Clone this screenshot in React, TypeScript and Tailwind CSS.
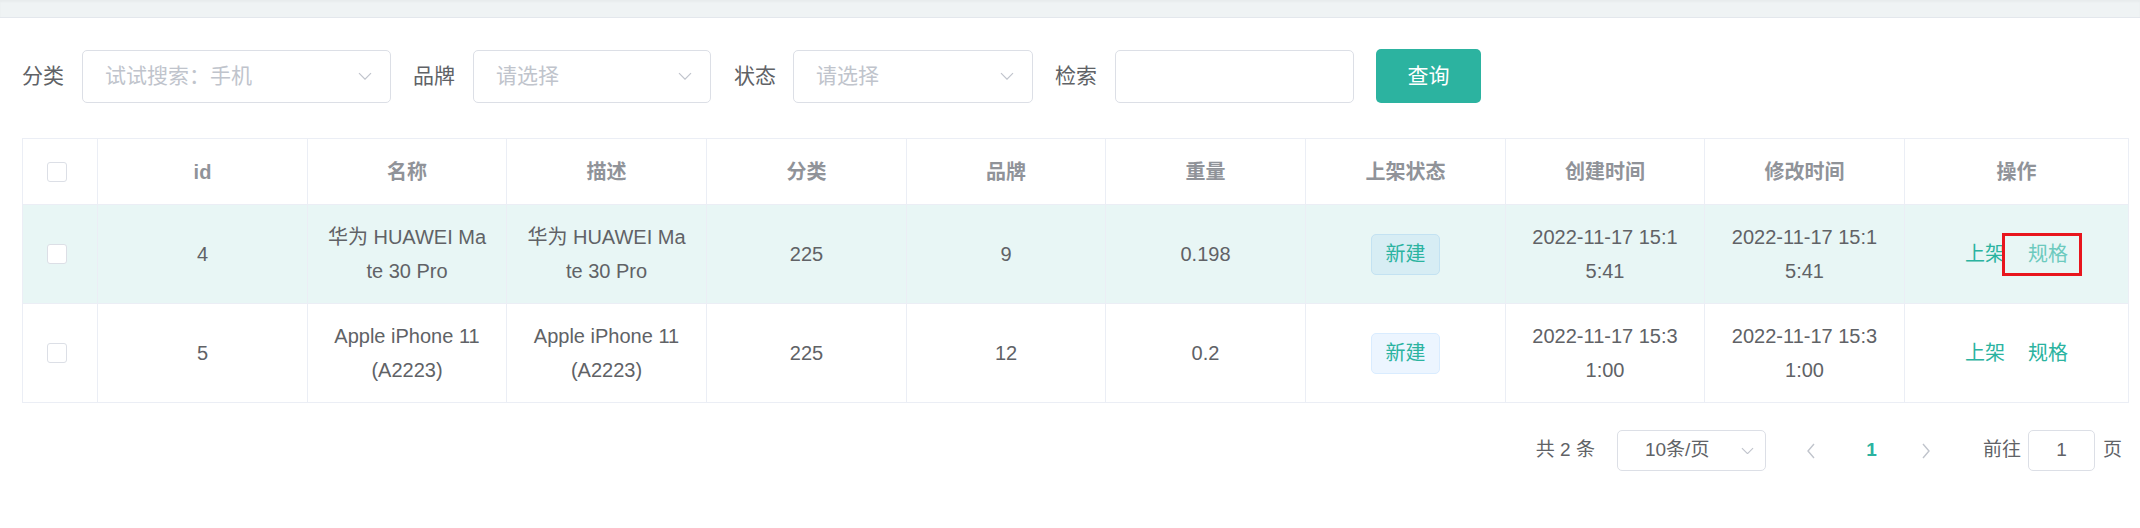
import React from 'react';

const font = 'font-["Liberation_Sans","Noto_Sans_CJK_SC",sans-serif]';

function Chevron({ size = 14 }: { size?: number }) {
  return (
    <svg width={size} height={size * 0.6} viewBox="0 0 14 8" fill="none">
      <polyline points="1,1 7,7 13,1" stroke="#c0c4cc" strokeWidth="1.2" />
    </svg>
  );
}

function Select({ placeholder, width }: { placeholder: string; width: string }) {
  return (
    <div className={`${width} h-[53px] border border-[#dcdfe6] rounded-[5px] bg-white flex items-center justify-between pl-[22px] pr-[18px]`}>
      <span className="text-[21px] text-[#c0c4cc]">{placeholder}</span>
      <Chevron />
    </div>
  );
}

function Checkbox() {
  return <div className="w-[20px] h-[20px] rounded-[3px] border border-[#dcdfe6] bg-white" />;
}

const headers = ['id', '名称', '描述', '分类', '品牌', '重量', '上架状态', '创建时间', '修改时间', '操作'];
const widths = [75, 210, 199, 200, 200, 199, 200, 200, 199, 200, 224];

const rows = [
  {
    id: '4',
    name: ['华为 HUAWEI Ma', 'te 30 Pro'],
    category: '225',
    brand: '9',
    weight: '0.198',
    created: ['2022-11-17 15:1', '5:41'],
    active: true,
  },
  {
    id: '5',
    name: ['Apple iPhone 11', '(A2223)'],
    category: '225',
    brand: '12',
    weight: '0.2',
    created: ['2022-11-17 15:3', '1:00'],
    active: false,
  },
];

function Lines({ lines }: { lines: string[] }) {
  return (
    <div className="flex flex-col items-center leading-[34px]">
      {lines.map((l) => (
        <span key={l} className="whitespace-nowrap">{l}</span>
      ))}
    </div>
  );
}

export default function App() {
  return (
    <div className={`min-h-screen bg-white ${font} text-[#606266]`}>
      <div className="h-[18px] bg-[#eff3f4] border-b border-[#e3e7ec] shadow-[inset_0_2px_2px_rgba(0,0,0,0.03)]" />
      <div className="pl-[22px] pr-[11px]">
        {/* filters */}
        <div className="flex items-center pt-[31px] text-[21px]">
          <span className="mr-[18px]">分类</span>
          <Select placeholder="试试搜索：手机" width="w-[309px]" />
          <span className="ml-[22px] mr-[18px]">品牌</span>
          <Select placeholder="请选择" width="w-[238px]" />
          <span className="ml-[23px] mr-[17px]">状态</span>
          <Select placeholder="请选择" width="w-[240px]" />
          <span className="ml-[22px] mr-[18px]">检索</span>
          <div className="w-[239px] h-[53px] border border-[#dcdfe6] rounded-[5px] bg-white" />
          <button className="ml-[22px] w-[105px] h-[54px] rounded-[5px] bg-[#2cb3a0] text-white text-[21px]">查询</button>
        </div>

        {/* table */}
        <table className="mt-[35px] w-[2107px] table-fixed border-collapse border border-[#ebeef5] text-[20px]">
          <colgroup>
            {widths.map((w, i) => (
              <col key={i} style={{ width: w }} />
            ))}
          </colgroup>
          <thead>
            <tr className="h-[66px]">
              <th className="border border-[#ebeef5] pl-[24px]">
                <Checkbox />
              </th>
              {headers.map((h) => (
                <th key={h} className="border border-[#ebeef5] font-bold text-[#909399] text-center">
                  {h}
                </th>
              ))}
            </tr>
          </thead>
          <tbody>
            {rows.map((r) => {
              const cell = 'border border-[#ebeef5] text-center';
              return (
                <tr key={r.id} className={`h-[99px] ${r.active ? 'bg-[#e8f6f5]' : 'bg-white'}`}>
                  <td className={`${cell} pl-[24px]`}>
                    <Checkbox />
                  </td>
                  <td className={cell}>{r.id}</td>
                  <td className={cell}><Lines lines={r.name} /></td>
                  <td className={cell}><Lines lines={r.name} /></td>
                  <td className={cell}>{r.category}</td>
                  <td className={cell}>{r.brand}</td>
                  <td className={cell}>{r.weight}</td>
                  <td className={cell}>
                    <span
                      className={`inline-flex items-center justify-center w-[69px] h-[41px] rounded-[5px] border text-[#2bb3a0] ${
                        r.active ? 'bg-[#d7edf4] border-[#c3e2f2]' : 'bg-[#ecf5ff] border-[#d9ecff]'
                      }`}
                    >
                      新建
                    </span>
                  </td>
                  <td className={cell}><Lines lines={r.created} /></td>
                  <td className={cell}><Lines lines={r.created} /></td>
                  <td className={cell}>
                    <div className="flex items-center justify-center gap-[23px] leading-[20px]">
                      <span className="text-[#2bb3a0]">上架</span>
                      <span className={`relative ${r.active ? 'text-[#6ccabe]' : 'text-[#2bb3a0]'}`}>
                        规格
                        {r.active && (
                          <span className="absolute left-[-26px] right-[-14px] top-[-11px] bottom-[-12px] border-[3px] border-[#e8151d]" />
                        )}
                      </span>
                    </div>
                  </td>
                </tr>
              );
            })}
          </tbody>
        </table>

        {/* pagination */}
        <div className="mt-[27px] flex items-center justify-end pr-[7px] text-[19px]">
          <span className="mr-[22px]">共 2 条</span>
          <div className="w-[149px] h-[41px] border border-[#dcdfe6] rounded-[5px] flex items-center pl-[27px] pr-[11px] justify-between">
            <span>10条/页</span>
            <Chevron size={13} />
          </div>
          <div className="ml-[25px] w-[41px] flex justify-center">
            <svg width="10" height="16" viewBox="0 0 10 16" fill="none">
              <polyline points="8,1 2,8 8,15" stroke="#c0c4cc" strokeWidth="1.4" />
            </svg>
          </div>
          <div className="ml-[19px] w-[41px] text-center font-bold text-[#2bb3a0]">1</div>
          <div className="ml-[14px] w-[41px] flex justify-center">
            <svg width="10" height="16" viewBox="0 0 10 16" fill="none">
              <polyline points="2,1 8,8 2,15" stroke="#c0c4cc" strokeWidth="1.4" />
            </svg>
          </div>
          <span className="ml-[36px]">前往</span>
          <div className="ml-[7px] w-[67px] h-[41px] border border-[#dcdfe6] rounded-[5px] flex items-center justify-center">1</div>
          <span className="ml-[8px]">页</span>
        </div>
      </div>
    </div>
  );
}
